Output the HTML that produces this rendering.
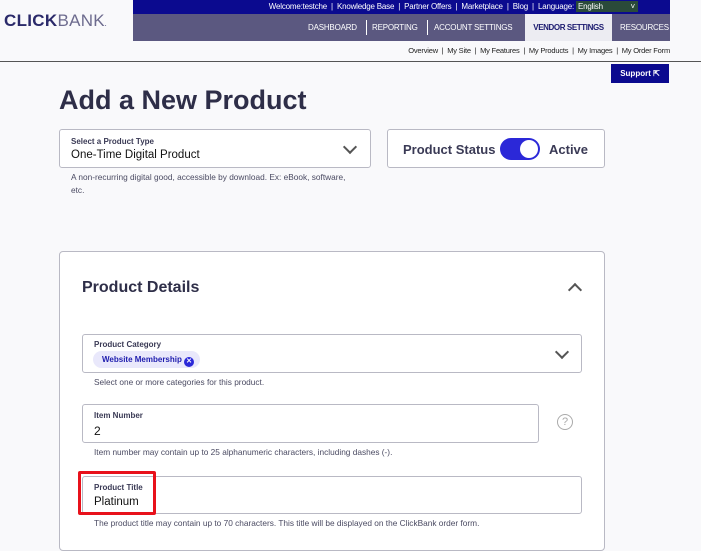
<!DOCTYPE html>
<html><head><style>
body{margin:0;width:701px;height:536px;overflow:hidden;background:#f9f9fb;font-family:"Liberation Sans",sans-serif;position:relative;color:#2b2b45}
.a{position:absolute}
.top{left:133px;top:0;width:537px;height:14px;background:#0b0a8f;color:#fff;font-size:8px;line-height:14px;text-align:right;letter-spacing:-.2px}
.nav{left:133px;top:14px;width:537px;height:27px;background:#5b5880;color:#fff;font-size:8px;line-height:27px;letter-spacing:-.2px}
.nav span{position:absolute;top:0}
.sub{top:46px;right:31px;font-size:7.5px;color:#222;letter-spacing:-.2px}
.box{background:#fff;border:1px solid #b9b9c4;border-radius:3px;box-sizing:border-box}
.lbl{font-size:8px;font-weight:bold;color:#3a3a55}
.help{font-size:8.3px;color:#4a4a62}
.chev{width:8px;height:8px;border-right:2px solid #555;border-bottom:2px solid #555;transform:rotate(45deg)}
</style></head><body>
<div class="a" style="left:4px;top:11px;font-size:17px;font-weight:bold;color:#2b2a6a;letter-spacing:.3px">CLICK<span style="font-weight:normal;color:#6d6b8e">BANK</span><span style="font-size:5px">.</span></div>
<div class="a top"><span style="padding-right:32px">Welcome:testche &nbsp;|&nbsp; Knowledge Base &nbsp;|&nbsp; Partner Offers &nbsp;|&nbsp; Marketplace &nbsp;|&nbsp; Blog &nbsp;|&nbsp; Language: <span style="background:#2a4a3a;display:inline-block;width:60px;text-align:left;line-height:11px;padding-left:2px">English <span style="float:right;padding-right:3px">˅</span></span></span></div>
<div class="a nav">
<span style="left:175px">DASHBOARD</span><span style="left:233px;top:6px;height:15px;border-left:1px solid #fff"></span>
<span style="left:239px">REPORTING</span><span style="left:294px;top:6px;height:15px;border-left:1px solid #fff"></span>
<span style="left:301px">ACCOUNT SETTINGS</span>
<span style="left:392px;width:87px;height:27px;background:#ececf2;color:#1b1a6f;font-weight:bold;text-align:center;letter-spacing:-.4px">VENDOR SETTINGS</span>
<span style="left:487px">RESOURCES</span></div>
<div class="a sub">Overview &nbsp;| &nbsp;My Site &nbsp;| &nbsp;My Features &nbsp;| &nbsp;My Products &nbsp;| &nbsp;My Images &nbsp;| &nbsp;My Order Form</div>
<div class="a" style="left:0;top:61px;width:701px;height:1px;background:#555"></div>
<div class="a" style="left:611px;top:64px;width:58px;height:19px;background:#0b0a8f;color:#fff;font-size:8px;font-weight:bold;line-height:19px;text-align:center">Support ⇱</div>
<div class="a" style="left:59px;top:85px;font-size:27px;font-weight:bold;color:#2e2e48">Add a New Product</div>
<div class="a box" style="left:59px;top:129px;width:312px;height:39px"><div class="a lbl" style="left:11px;top:7px">Select a Product Type</div><div class="a" style="left:11px;top:19px;font-size:11.5px;color:#111">One-Time Digital Product</div><div class="a chev" style="left:285px;top:12px"></div></div>
<div class="a help" style="left:71px;top:171px;line-height:13px;width:280px">A non-recurring digital good, accessible by download. Ex: eBook, software, etc.</div>
<div class="a box" style="left:387px;top:129px;width:218px;height:39px"><div class="a" style="left:15px;top:12px;font-size:13px;font-weight:bold;color:#3a3a55">Product Status</div><div class="a" style="left:112px;top:8px;width:40px;height:22px;border-radius:11px;background:#2b28d8"><div class="a" style="left:20px;top:2px;width:18px;height:18px;border-radius:9px;background:#fff"></div></div><div class="a" style="left:161px;top:12px;font-size:13px;font-weight:bold;color:#3a3a55">Active</div></div>
<div class="a box" style="left:59px;top:251px;width:546px;height:300px;border-radius:4px">
<div class="a" style="left:22px;top:27px;font-size:16px;font-weight:bold;color:#2e2e48">Product Details</div>
<div class="a chev" style="left:510px;top:33px;transform:rotate(-135deg)"></div></div>
<div class="a box" style="left:82px;top:334px;width:500px;height:39px"><div class="a lbl" style="left:11px;top:5px">Product Category</div><div class="a" style="left:10px;top:16px;height:17px;width:107px;border-radius:9px;background:#e9e8fb;font-size:8px;font-weight:bold;color:#1e1cae;line-height:17px;padding-left:9px;box-sizing:border-box">Website Membership <span style="display:inline-block;width:10px;height:10px;border-radius:5px;background:#2b28d8;color:#fff;font-size:7px;line-height:10px;text-align:center;vertical-align:-1px">✕</span></div><div class="a chev" style="left:474px;top:12px"></div></div>
<div class="a help" style="left:94px;top:377px">Select one or more categories for this product.</div>
<div class="a box" style="left:82px;top:404px;width:457px;height:39px"><div class="a lbl" style="left:11px;top:6px">Item Number</div><div class="a" style="left:11px;top:19px;font-size:12px;color:#111">2</div></div>
<div class="a" style="left:557px;top:414px;width:14px;height:14px;border:1.5px solid #aaa;border-radius:50%;color:#aaa;font-size:11px;text-align:center;line-height:14px">?</div>
<div class="a help" style="left:94px;top:447px">Item number may contain up to 25 alphanumeric characters, including dashes (-).</div>
<div class="a box" style="left:82px;top:476px;width:500px;height:38px"><div class="a lbl" style="left:11px;top:6px">Product Title</div><div class="a" style="left:11px;top:19px;font-size:11.5px;color:#111">Platinum</div></div>
<div class="a" style="left:78px;top:471px;width:78px;height:44px;border:3px solid #e8111b;box-sizing:border-box;border-radius:2px"></div>
<div class="a help" style="left:94px;top:518px">The product title may contain up to 70 characters. This title will be displayed on the ClickBank order form.</div>
</body></html>
